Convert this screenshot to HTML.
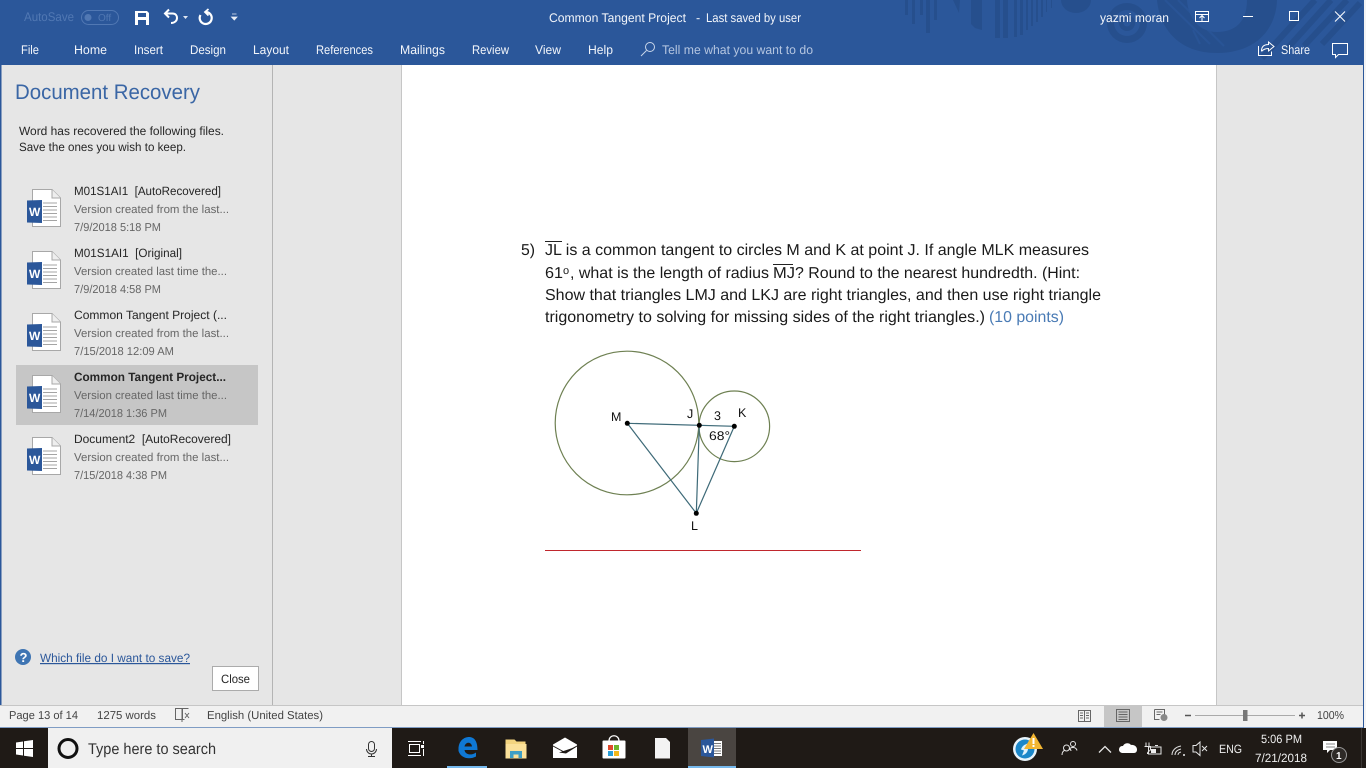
<!DOCTYPE html>
<html><head><meta charset="utf-8"><title>Common Tangent Project</title>
<style>
html,body{margin:0;padding:0;width:1366px;height:768px;overflow:hidden;background:#e6e6e6}
svg{display:block;position:absolute;left:0;top:0}
text{font-family:"Liberation Sans",sans-serif;white-space:pre}
.r{font-size:12.5px;fill:#f2f5fa}
.n{font-size:12px;fill:#262626}
.g{font-size:11.5px;fill:#666}
.d{font-size:15.8px;fill:#1a1a1a}
.s{font-size:11.5px;fill:#444}
.l{font-size:12.5px;fill:#111}
</style></head><body>
<svg width="1366" height="768" viewBox="0 0 1366 768" xmlns="http://www.w3.org/2000/svg" text-rendering="geometricPrecision">
<defs>
<g id="wd">
<path d="M32.500 189.500H52L60.500 198V226.500H32.500Z" fill="#fff" stroke="#a8a8a8"/>
<path d="M52 189.500V198H60.500" fill="#eee" stroke="#a8a8a8"/>
<path d="M43 203H57M43 206.500H57M43 210H57M43 213.500H57M43 217H57M43 220.500H57" stroke="#a4a4a4"/>
<path d="M27 200.500L42 200V223L27 222.500Z" fill="#2b579a"/>
</g>
</defs>
<!-- title bar -->
<rect width="1366" height="65" fill="#2b579a"/>
<g fill="#264f8d">
<path d="M905 0h3v15h-3zM912 0h3v24h-3zM920 0h3v15h-3zM926 0h4v33h-4zM934 0h3v20h-3z"/>
<path d="M953 0h7l-1 13z"/>
<path d="M971 0h11v30l-7-2-4-4z"/>
<path d="M995 0h5v38h-5zM1003 0h5v38h-5z"/>
<path d="M1014 0h3v37h-3zM1020 0h3v35h-3zM1026 0h2v30h-2zM1031 0h2v26h-2zM1036 0h2v22h-2zM1041 0h2v17h-2zM1046 0h1v12h-1zM1051 0h1v8h-1z"/>
<path d="M1061 0h30a15 13 0 0 1-30 0z"/>
<circle cx="1127" cy="23" r="20"/>
</g>
<circle cx="1127" cy="23" r="13" fill="#2b579a"/><circle cx="1127" cy="23" r="8" fill="#264f8d"/><circle cx="1127" cy="23" r="3.500" fill="#2b579a"/>
<path d="M1157 0C1160 30 1180 53 1217 53C1255 53 1276 30 1277 0H1247C1247 22 1235 32 1217 32C1199 32 1188 18 1187 0Z" fill="#264f8d"/>
<path d="M1165 0L1210 44M1178 0L1224 46M1193 30L1200 44" stroke="#2b579a" stroke-width="2" fill="none" opacity=".7"/>
<g stroke="#264f8d" stroke-width="6" fill="none"><path d="M1315 0L1262 58M1331 0L1284 52M1347 0L1304 46M1360 3L1322 44"/></g>
<!-- QAT -->
<text x="24" y="21" font-size="12.500" fill="#5178b3" textLength="50" lengthAdjust="spacingAndGlyphs">AutoSave</text>
<rect x="81.500" y="10.500" width="37" height="14" rx="7" fill="none" stroke="#5178b3"/>
<circle cx="88" cy="17.500" r="3.500" fill="#5178b3"/>
<text x="98" y="21" font-size="10" fill="#5178b3">Off</text>
<path d="M135 11h12l2 2v12h-14z" fill="#fff"/>
<rect x="138" y="13" width="8" height="4" fill="#2b579a"/><rect x="138" y="20" width="8" height="5" fill="#2b579a"/>
<path d="M169 9.500L165 13.500L169 17.500M165.500 13.500H172.500C175.500 13.500 177 15.500 177 18C177 20.500 175 23 171 23" fill="none" stroke="#fff" stroke-width="2"/>
<path d="M183 16h5l-2.500 3z" fill="#dfe6f2"/>
<path d="M206 12A6 6 0 1 1 200.500 15" fill="none" stroke="#fff" stroke-width="2.200"/><path d="M208.500 9L205 12L208.500 15.500" fill="none" stroke="#fff" stroke-width="1.800"/>
<path d="M232 14h4.500M231.500 17h5.500l-2.700 3z" stroke="#e8edf5" fill="#e8edf5" stroke-width=".8"/>
<!-- title -->
<text x="549" y="22" class="r" textLength="137" lengthAdjust="spacingAndGlyphs">Common Tangent Project</text>
<text x="696" y="22" class="r">-</text>
<text x="706" y="22" class="r" textLength="95" lengthAdjust="spacingAndGlyphs">Last saved by user</text>
<text x="1100" y="22" class="r" textLength="69" lengthAdjust="spacingAndGlyphs">yazmi moran</text>
<g fill="none" stroke="#fff">
<path d="M1195.500 11.500h13v10h-13zM1195.500 14.500h13M1202 21v-5M1199.500 18l2.500-2.500 2.500 2.500"/>
<path d="M1243 16.500h10"/>
<rect x="1289.500" y="11.500" width="9" height="9"/>
<path d="M1335 11.500L1345 21.500M1345 11.500L1335 21.500"/>
<path d="M1258.500 46v9.500h13v-4M1261.500 51c0-4.500 2.500-6.500 7-6.500V42l5.500 4.500-5.500 4.500v-2.500c-3 0-5 .5-7 3" stroke-width="1"/>
<path d="M1332.500 43.500h15v11h-9l-3 3v-3h-3z"/>
<circle cx="650" cy="47" r="4.500" stroke="#c9d6ea"/><path d="M646.500 50.500L641 56" stroke="#c9d6ea"/>
</g>
<!-- ribbon -->
<text x="21" y="54" class="r" textLength="18" lengthAdjust="spacingAndGlyphs">File</text>
<text x="74" y="54" class="r" textLength="33" lengthAdjust="spacingAndGlyphs">Home</text>
<text x="134" y="54" class="r" textLength="29" lengthAdjust="spacingAndGlyphs">Insert</text>
<text x="190" y="54" class="r" textLength="36" lengthAdjust="spacingAndGlyphs">Design</text>
<text x="253" y="54" class="r" textLength="36" lengthAdjust="spacingAndGlyphs">Layout</text>
<text x="316" y="54" class="r" textLength="57" lengthAdjust="spacingAndGlyphs">References</text>
<text x="400" y="54" class="r" textLength="45" lengthAdjust="spacingAndGlyphs">Mailings</text>
<text x="472" y="54" class="r" textLength="37" lengthAdjust="spacingAndGlyphs">Review</text>
<text x="535" y="54" class="r" textLength="26" lengthAdjust="spacingAndGlyphs">View</text>
<text x="588" y="54" class="r" textLength="25" lengthAdjust="spacingAndGlyphs">Help</text>
<text x="662" y="54" font-size="12.500" fill="#b4c5e0" textLength="151" lengthAdjust="spacingAndGlyphs">Tell me what you want to do</text>
<text x="1281" y="54" class="r" textLength="29" lengthAdjust="spacingAndGlyphs">Share</text>
<!-- workspace -->
<rect y="65" width="1366" height="640" fill="#e6e6e6"/>
<rect x="402" y="65" width="814" height="640" fill="#fff"/>
<path d="M401.500 65V705M1216.500 65V705" stroke="#c6c6c6"/>
<rect x="0" y="65" width="1.500" height="663" fill="#2b579a"/>
<rect x="272" y="65" width="1" height="640" fill="#b4b4b4"/>
<!-- pane -->
<text x="15" y="99" font-size="21" fill="#3a66a5" textLength="185" lengthAdjust="spacingAndGlyphs">Document Recovery</text>
<text x="19" y="135" class="n" textLength="205" lengthAdjust="spacingAndGlyphs">Word has recovered the following files.</text>
<text x="19" y="151" class="n" textLength="167" lengthAdjust="spacingAndGlyphs">Save the ones you wish to keep.</text>
<rect x="16" y="365" width="242" height="60" fill="#c6c6c6"/>
<use href="#wd"/>
<use href="#wd" y="62"/>
<use href="#wd" y="124"/>
<use href="#wd" y="186"/>
<use href="#wd" y="248"/>
<g font-size="12" font-weight="700" fill="#fff">
<text x="29" y="216">W</text><text x="29" y="278">W</text><text x="29" y="340">W</text><text x="29" y="402">W</text><text x="29" y="464">W</text>
</g>
<text x="74" y="195" class="n" textLength="147" lengthAdjust="spacingAndGlyphs">M01S1AI1  [AutoRecovered]</text>
<text x="74" y="213" class="g" textLength="155" lengthAdjust="spacingAndGlyphs">Version created from the last...</text>
<text x="74" y="231" class="g" textLength="87" lengthAdjust="spacingAndGlyphs">7/9/2018 5:18 PM</text>
<text x="74" y="257" class="n" textLength="108" lengthAdjust="spacingAndGlyphs">M01S1AI1  [Original]</text>
<text x="74" y="275" class="g" textLength="153" lengthAdjust="spacingAndGlyphs">Version created last time the...</text>
<text x="74" y="293" class="g" textLength="87" lengthAdjust="spacingAndGlyphs">7/9/2018 4:58 PM</text>
<text x="74" y="319" class="n" textLength="153" lengthAdjust="spacingAndGlyphs">Common Tangent Project (...</text>
<text x="74" y="337" class="g" textLength="155" lengthAdjust="spacingAndGlyphs">Version created from the last...</text>
<text x="74" y="355" class="g" textLength="100" lengthAdjust="spacingAndGlyphs">7/15/2018 12:09 AM</text>
<text x="74" y="381" class="n" font-weight="700" textLength="152" lengthAdjust="spacingAndGlyphs">Common Tangent Project...</text>
<text x="74" y="399" class="g" textLength="153" lengthAdjust="spacingAndGlyphs">Version created last time the...</text>
<text x="74" y="417" class="g" textLength="93" lengthAdjust="spacingAndGlyphs">7/14/2018 1:36 PM</text>
<text x="74" y="443" class="n" textLength="157" lengthAdjust="spacingAndGlyphs">Document2  [AutoRecovered]</text>
<text x="74" y="461" class="g" textLength="155" lengthAdjust="spacingAndGlyphs">Version created from the last...</text>
<text x="74" y="479" class="g" textLength="93" lengthAdjust="spacingAndGlyphs">7/15/2018 4:38 PM</text>
<circle cx="23" cy="657" r="8" fill="#3f75b3"/>
<text x="19.500" y="662" font-size="13" font-weight="700" fill="#fff">?</text>
<text x="40" y="662" font-size="12" fill="#2b579a" text-decoration="underline" textLength="150" lengthAdjust="spacingAndGlyphs">Which file do I want to save?</text>
<rect x="212.500" y="666.500" width="46" height="24" fill="#fff" stroke="#ababab"/>
<text x="221" y="683" class="n" textLength="29" lengthAdjust="spacingAndGlyphs">Close</text>
<!-- document -->
<text x="521" y="255" class="d">5)</text>
<path d="M545 241.500H562M773 264.500H793" stroke="#222" stroke-width="1"/>
<text x="545" y="255" class="d" textLength="544" lengthAdjust="spacingAndGlyphs">JL is a common tangent to circles M and K at point J. If angle MLK measures</text>
<text x="545" y="278" class="d" textLength="18" lengthAdjust="spacingAndGlyphs">61</text>
<text x="563" y="274" font-size="11" fill="#1a1a1a">o</text>
<text x="570" y="278" class="d" textLength="199" lengthAdjust="spacingAndGlyphs">, what is the length of radius</text>
<text x="773" y="278" class="d" textLength="22" lengthAdjust="spacingAndGlyphs">MJ</text>
<text x="795" y="278" class="d" textLength="285" lengthAdjust="spacingAndGlyphs">? Round to the nearest hundredth. (Hint:</text>
<text x="545" y="300" class="d" textLength="556" lengthAdjust="spacingAndGlyphs">Show that triangles LMJ and LKJ are right triangles, and then use right triangle</text>
<text x="545" y="322" class="d" textLength="440" lengthAdjust="spacingAndGlyphs">trigonometry to solving for missing sides of the right triangles.)</text>
<text x="989" y="322" font-size="15.800" fill="#4a7bb5" textLength="75" lengthAdjust="spacingAndGlyphs">(10 points)</text>
<!-- diagram -->
<g fill="none" stroke="#6e8052" stroke-width="1.200"><circle cx="627" cy="423" r="71.800"/><circle cx="734.300" cy="426.300" r="35.300"/></g>
<path d="M627.300 423.300L734.300 426.300L696.300 513.300L627.300 423.300M699.300 425.300L696.300 513.300" fill="none" stroke="#3e6a78" stroke-width="1.200"/>
<g fill="#000"><circle cx="627.300" cy="423.300" r="2.500"/><circle cx="699.300" cy="425.300" r="2.500"/><circle cx="734.300" cy="426.300" r="2.500"/><circle cx="696.300" cy="513.300" r="2.500"/></g>
<g font-size="12.500" fill="#111">
<text x="611" y="421">M</text><text x="687" y="418">J</text><text x="714" y="420">3</text><text x="738" y="417">K</text><text x="709" y="440" textLength="21" lengthAdjust="spacingAndGlyphs">68°</text><text x="691" y="530">L</text>
</g>
<rect x="545" y="550" width="316" height="1" fill="#c0272d"/>
<!-- status -->
<rect y="705" width="1366" height="22" fill="#f1f1f1"/>
<rect y="705" width="1366" height="1" fill="#c6c6c6"/>
<rect y="727" width="1366" height="1" fill="#7f9cc4"/>
<rect x="1104" y="706" width="38" height="21" fill="#c6c6c6"/>
<text x="9" y="719" class="s" textLength="69" lengthAdjust="spacingAndGlyphs">Page 13 of 14</text>
<text x="97" y="719" class="s" textLength="59" lengthAdjust="spacingAndGlyphs">1275 words</text>
<text x="207" y="719" class="s" textLength="116" lengthAdjust="spacingAndGlyphs">English (United States)</text>
<text x="1317" y="719" class="s" textLength="27" lengthAdjust="spacingAndGlyphs">100%</text>
<g fill="none" stroke="#666">
<path d="M182.500 710.500v9h-7v-11h7zM182.500 708.500h6M182.500 719.500h2M182 708v14M185 713l4 5M189 713l-4 5"/>
<path d="M1078.500 710.500h12v11h-12zM1084.500 710.500v11M1080 713h3M1080 715.500h3M1080 718h3M1086 713h3M1086 715.500h3M1086 718h3"/>
<path d="M1116.500 709.500h13v12h-13zM1118.500 712h9M1118.500 714.500h9M1118.500 717h9M1118.500 719.500h9"/>
<path d="M1154.500 709.500h10v7M1154.500 709.500v10h5M1156.500 712h6M1156.500 714.500h4"/>
<circle cx="1164" cy="717.500" r="3.500" fill="#888" stroke="none"/>
<path d="M1185 715.500h6M1299 715.500h6M1302 712.500v6" stroke="#555" stroke-width="1.500"/>
<path d="M1195 715.500h100" stroke="#aaa"/>
</g>
<rect x="1243" y="710" width="4.500" height="11" fill="#777"/>
<!-- right window edge -->
<rect x="1363" y="65" width="1" height="663" fill="#2b579a"/>
<rect x="1364" y="0" width="2" height="728" fill="#f4f4f4"/>
<!-- taskbar -->
<rect y="728" width="1366" height="40" fill="#1f1a16"/>
<rect x="48" y="728" width="344" height="40" fill="#f0f0f0"/>
<rect x="688" y="728" width="48" height="40" fill="#4a4541"/>
<rect x="688" y="766" width="48" height="2" fill="#76b9ed"/>
<rect x="447" y="766" width="40" height="2" fill="#76b9ed"/>
<path d="M16 742.500l7-1v6.500h-7zM24 741.300l9-1.300v8h-9zM16 749h7v6.500l-7-1zM24 749h9v8l-9-1.300z" fill="#fff"/>
<circle cx="68" cy="748.500" r="9" fill="none" stroke="#111" stroke-width="3"/>
<text x="88" y="754" font-size="15.500" fill="#333" textLength="128" lengthAdjust="spacingAndGlyphs">Type here to search</text>
<g fill="none" stroke="#333"><rect x="368.500" y="741.500" width="6" height="10" rx="3"/><path d="M366.500 749a5 5 0 0 0 10 0M371.500 754v2.500M368 756.500h7"/></g>
<!-- task view -->
<g fill="none" stroke="#fff"><rect x="409.500" y="744.500" width="10" height="8"/><path d="M408 741.500h13M408 755.500h13M423.500 741v3M423.500 749v7"/></g><rect x="421" y="745" width="3" height="3" fill="#fff"/>
<!-- edge -->
<path d="M458.500 749C458.500 741 464 737 469 737C474.500 737 477.500 741.500 477.500 750H464.500C465 754.500 471 756 476 752.500V756.500C469.500 760 461 758.500 458.500 751ZM464.500 746.500H472C471.500 741.500 465.500 741.500 464.500 746.500Z" fill="#0f78d4" fill-rule="evenodd"/>
<!-- explorer -->
<path d="M505.500 739.500h9l2 2h9v17h-20z" fill="#f3d47f"/>
<path d="M505.500 744h21v14.500h-21z" fill="#fbe19a"/>
<path d="M510 758v-7h12v7h-3.500v-3.500h-5V758z" fill="#3e9fc5"/>
<!-- mail -->
<path d="M553 744.500l12-7 12 7v1l-12 6.500-12-6.500z" fill="#fff"/>
<path d="M553 746.500l12 6.500 12-6.500v11.500h-24z" fill="#fff"/>
<path d="M559 752.500l18-6-11 7z" fill="#1f1a16"/>
<!-- store -->
<rect x="602.500" y="740.500" width="23" height="18" rx="1" fill="#fff"/>
<path d="M609 741c0-7 10-7 10 0" fill="none" stroke="#fff" stroke-width="1.300"/>
<rect x="608" y="745" width="5" height="5" fill="#e0492c"/><rect x="614" y="745" width="5" height="5" fill="#6fb52c"/><rect x="608" y="751" width="5" height="5" fill="#2a9fd8"/><rect x="614" y="751" width="5" height="5" fill="#f3b71c"/>
<!-- file -->
<path d="M655 738h11l4 4v16.500h-15z" fill="#f3f3f3"/>
<!-- word -->
<path d="M707 741h15v15h-15z" fill="#fff"/>
<path d="M714 743.500h7M714 746h7M714 748.500h7M714 751h7M714 753.500h7" stroke="#777"/>
<path d="M701 740l13-1.500v19L701 756z" fill="#2b579a"/>
<text x="702.500" y="753" font-size="11" font-weight="700" fill="#fff">W</text>
<!-- tray -->
<circle cx="1025" cy="749" r="12" fill="#e8f4fb"/><circle cx="1025" cy="749" r="9.500" fill="#1b87c9"/>
<path d="M1028 743.500c-4 1-6 3-7 6l3 1-2 5c4-1 6-4 6-7l-3-1z" fill="#dff1fb"/>
<path d="M1033.500 733L1043 749H1024Z" fill="#f2b632"/>
<rect x="1032.500" y="738" width="2" height="6" fill="#fff"/><rect x="1032.500" y="745" width="2" height="2" fill="#fff"/>
<g fill="none" stroke="#e6e6e6" stroke-width="1">
<circle cx="1066.500" cy="748" r="3"/><path d="M1062 755c0-3 2-4.500 3-5M1071 751c0-1-1-2-2-2.500"/>
<circle cx="1073" cy="744" r="2.500"/><path d="M1069 750c.5-1.500 2-2.500 4-2.500s3.500 1 4 3"/>
<path d="M1099 752.500l6-6 6 6" stroke-width="1.300"/>
<path d="M1155 745.500h3M1148.500 747h12.500v7h-12.500z"/>
<path d="M1146 742.500v4M1149 742.500v4M1144.500 746.500h6v3c0 1.500-3 2-3 3.500v1"/>
<path d="M1172 755c0-4 3-8 9-9M1175 755c0-3 2-5 6-6M1178 755c0-1 .500-2.500 3-3" stroke="#ddd"/>
<path d="M1193 745.500h3l4-3.500v13.500l-4-3.500h-3z"/>
<path d="M1202 746l5 5M1207 746l-5 5"/>
<path d="M1323 741h14v9h-7l-3 3v-3h-4z" fill="#fff" stroke="none"/>
</g>
<path d="M1122 753a3.500 3.500 0 0 1 1-7c1-3 6-4 8-1 3-.5 6 1.500 6 4.500 0 2-1 3.500-3 3.500z" fill="#fff"/>
<circle cx="1184" cy="755" r="1" fill="#eee"/>
<path d="M1151 749h5v4h-5z" fill="#eee"/>
<text x="1219" y="753" font-size="12" fill="#eee" textLength="23" lengthAdjust="spacingAndGlyphs">ENG</text>
<text x="1261" y="743" font-size="12" fill="#eee" textLength="41" lengthAdjust="spacingAndGlyphs">5:06 PM</text>
<text x="1255" y="762" font-size="12" fill="#eee" textLength="52" lengthAdjust="spacingAndGlyphs">7/21/2018</text>
<path d="M1326 744h9M1326 747h9" stroke="#888"/>
<circle cx="1339" cy="755" r="7.500" fill="#2e2a27" stroke="#999"/>
<text x="1336" y="759" font-size="10" font-weight="700" fill="#fff">1</text>
<rect x="1361" y="728" width="1" height="40" fill="#3a3633"/>
</svg>
</body></html>
